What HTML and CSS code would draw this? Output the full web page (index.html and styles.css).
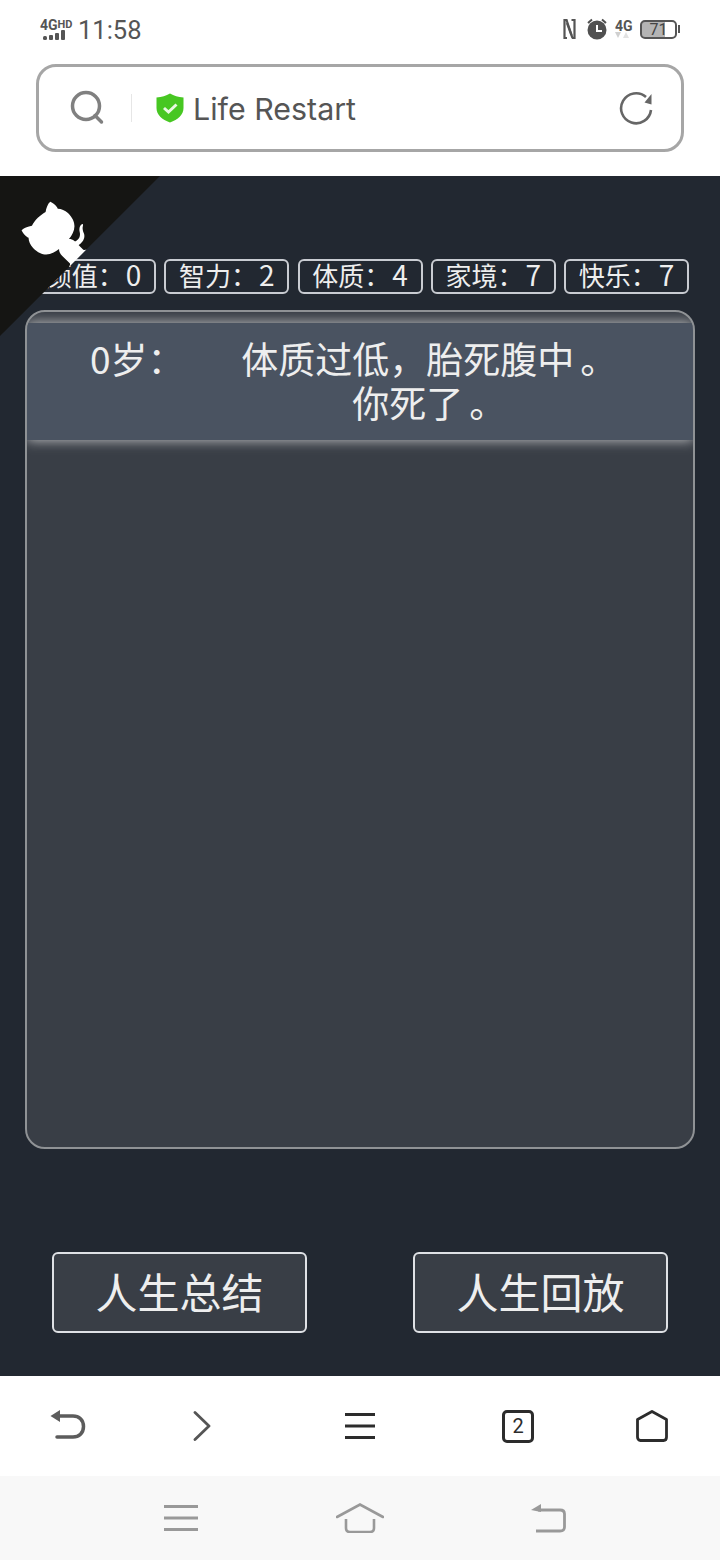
FILE: index.html
```html
<!DOCTYPE html>
<html lang="zh-CN">
<head>
  <meta charset="UTF-8" />
  <meta name="viewport" content="width=device-width, initial-scale=1.0" />
  <title>Life Restart</title>
  <link rel="stylesheet" href="styles.css">
</head>
<body>
  <header class="browser-top">
    <div class="status-bar">
      <div class="status-left">
        <div class="net">
          <div class="net-text">4G<span class="net-hd">HD</span></div>
          <svg class="net-bars" width="26" height="12" viewBox="0 0 26 12">
            <rect x="3" y="7" width="4" height="4" rx="1.5" fill="#555"/>
            <rect x="9" y="6" width="4" height="5" rx="1" fill="#555"/>
            <rect x="15" y="4" width="4" height="7" rx="1" fill="#555"/>
            <rect x="21" y="1" width="4" height="10" rx="1" fill="#555"/>
          </svg>
        </div>
        <span class="clock">11:58</span>
      </div>
      <div class="status-right">
        <svg width="14" height="22" viewBox="0 0 14 22" fill="none" stroke="#555" stroke-width="2.2">
          <path d="M5.500 2H2.500V20H5"/>
          <path d="M5 5L10.500 20"/>
          <path d="M4.500 2L9.500 17"/>
          <path d="M9.500 2H12.500V20H10"/>
        </svg>
        <svg class="alarm" width="22" height="22" viewBox="0 0 22 22">
          <circle cx="11" cy="12" r="9.5" fill="#505050"/>
          <path d="M2 5L6 1.5M20 5L16 1.5" stroke="#505050" stroke-width="2"/>
          <path d="M11 7V13H16" fill="none" stroke="#fff" stroke-width="2"/>
        </svg>
        <div class="net-4g">
          <div class="net-4g-text">4G</div>
          <svg width="14" height="7" viewBox="0 0 14 7">
            <path d="M0 0H6L3 6Z" fill="#d0d0d0"/>
            <path d="M8 6H14L11 0Z" fill="#e2e2e2"/>
          </svg>
        </div>
        <div class="battery"><div class="battery-body">71</div><div class="battery-nub"></div></div>
      </div>
    </div>

    <div class="address-bar">
      <svg class="search-icon" width="36" height="36" viewBox="0 0 36 36" fill="none" stroke="#808080" stroke-width="3.5">
        <circle cx="16" cy="16" r="13.5"/>
        <path d="M25 25.500L31.500 32" stroke-linecap="round"/>
      </svg>
      <span class="address-divider"></span>
      <svg class="shield" width="28" height="30" viewBox="0 0 28 30">
        <path d="M14 0.500C18 3 22 4 27.500 4.500V15C27.500 22 22 26.500 14 29.500C6 26.500 0.500 22 0.500 15V4.500C6 4 10 3 14 0.500Z" fill="#47c722"/>
        <path d="M8 15L12.500 19L20.500 11.500" fill="none" stroke="#e9f9e2" stroke-width="3"/>
      </svg>
      <span class="address-text">Life Restart</span>
      <svg class="reload" width="36" height="36" viewBox="0 0 36 36" fill="none">
        <path d="M33 20A15 15 0 1 1 28 7" stroke="#666" stroke-width="2.600"/>
        <path d="M33.500 4V14.500L26.500 12.500Z" fill="#666"/>
      </svg>
    </div>
  </header>

  <main class="game">
    <a class="corner" href="#" aria-label="GitHub">
      <svg width="160" height="160" viewBox="0 0 250 250">
        <g transform="translate(250 0) scale(-1 1)">
          <path d="M0,0 L115,115 L130,115 L142,142 L250,250 L250,0 Z" fill="#151513"/>
          <path d="M128.3,109.0 C113.8,99.7 119.0,89.6 119.0,89.6 C122.0,82.7 120.5,78.6 120.5,78.6 C119.2,72.0 123.4,76.3 123.4,76.3 C127.3,80.9 125.5,87.3 125.5,87.3 C122.9,97.6 130.6,101.9 134.4,103.2" fill="#fff"/>
          <path d="M115.0,115.0 C114.9,115.1 118.7,116.5 119.8,115.4 L133.7,101.6 C136.9,99.2 139.9,98.4 142.2,98.6 C133.8,88.0 127.5,74.4 143.8,58.0 C148.5,53.4 154.0,51.2 159.7,51.0 C160.3,49.4 163.2,43.6 171.4,40.1 C171.4,40.1 176.1,42.5 178.8,56.2 C183.1,58.6 187.2,61.8 190.9,65.4 C194.5,69.0 197.7,73.2 200.1,77.6 C213.8,80.2 216.3,84.9 216.3,84.9 C212.7,93.1 206.9,96.0 205.4,96.6 C205.1,102.4 203.0,107.8 198.3,112.5 C181.9,128.9 168.3,122.5 157.7,114.1 C157.9,116.9 156.7,120.9 152.7,124.9 L141.0,136.5 C139.8,137.7 141.6,141.9 141.8,141.8 Z" fill="#fff"/>
        </g>
      </svg>
    </a>

    <ul class="stats">
      <li class="stat">颜值：<span class="stat-num">0</span></li>
      <li class="stat">智力：<span class="stat-num">2</span></li>
      <li class="stat">体质：<span class="stat-num">4</span></li>
      <li class="stat">家境：<span class="stat-num">7</span></li>
      <li class="stat">快乐：<span class="stat-num">7</span></li>
    </ul>

    <div class="log">
      <div class="log-row">
        <span class="log-age">0岁：</span>
        <span class="log-text">体质过低，胎死腹中<span class="stop">。</span><br>你死了<span class="stop">。</span></span>
      </div>
    </div>

    <div class="actions">
      <button class="action" type="button">人生总结</button>
      <button class="action" type="button">人生回放</button>
    </div>
  </main>

  <nav class="toolbar">
    <svg width="36" height="34" viewBox="0 0 36 34" fill="none" stroke="#5c5c5c" stroke-width="3.500">
      <path d="M8 7H23C29 7 33.500 11 33.500 17.500C33.500 24 29 28 23 28H7" stroke-linecap="round"/>
      <path d="M0.500 7L10 1V13Z" fill="#5c5c5c" stroke="none"/>
    </svg>
    <svg width="18" height="30" viewBox="0 0 18 30" fill="none" stroke="#555" stroke-width="2.800">
      <path d="M2 1.500L16 15L2 28.500" stroke-linecap="round" stroke-linejoin="round"/>
    </svg>
    <svg width="30" height="26" viewBox="0 0 30 26" fill="none" stroke="#2c2c2c" stroke-width="2.800">
      <path d="M0 1.500H30M0 13H30M0 24.500H30"/>
    </svg>
    <div class="tab-count">2</div>
    <svg width="32" height="32" viewBox="0 0 32 32" fill="none" stroke="#2c2c2c" stroke-width="2.800" stroke-linejoin="round">
      <path d="M16 1.500L30.500 9.500V27C30.500 29 29.500 30.500 27.500 30.500H4.500C2.500 30.500 1.500 29 1.500 27V9.500Z"/>
    </svg>
  </nav>

  <nav class="sys-nav">
    <svg width="34" height="26" viewBox="0 0 34 26" fill="none" stroke="#999" stroke-width="2.800">
      <path d="M0 1.500H34M0 13H34M0 24.500H34"/>
    </svg>
    <svg class="sys-home" width="48" height="30" viewBox="0 0 48 30" fill="none" stroke="#999" stroke-width="2.600">
      <path d="M1 14L24 1.500L47 14" stroke-linecap="round"/>
      <path d="M10 16V25C10 27.500 11.500 29 14 29H34C36.500 29 38 27.500 38 25V16"/>
    </svg>
    <svg width="36" height="30" viewBox="0 0 36 30" fill="none" stroke="#999" stroke-width="2.800">
      <path d="M8 7H30C33 7 34.500 8.500 34.500 11V24C34.500 26.500 33 28 30 28H6"/>
      <path d="M1 7L11 1V9Z" fill="#999" stroke="none"/>
    </svg>
  </nav>
</body>
</html>
```

FILE: styles.css
```css
/* Global Styles */
* {
  box-sizing: border-box;
}
body {
  margin: 0;
  width: 720px;
  height: 1560px;
  display: flex;
  flex-direction: column;
  background-color: #fff;
  font-family: "Noto Sans CJK SC", "Noto Sans", sans-serif;
  overflow: hidden;
}
svg {
  display: block;
}

/* Browser chrome */
.browser-top {
  height: 176px;
  flex: none;
  background-color: #fff;
  font-family: Roboto, "Noto Sans", sans-serif;
}
.status-bar {
  height: 64px;
  padding: 15px 40px 0 40px;
  display: flex;
  justify-content: space-between;
  align-items: flex-start;
}
.status-left {
  display: flex;
  align-items: center;
  gap: 8px;
}
.net {
  width: 30px;
}
.net-text {
  font-size: 14px;
  line-height: 12px;
  font-weight: 700;
  color: #555;
  white-space: nowrap;
}
.net-hd {
  font-size: 11px;
  vertical-align: 2px;
}
.net-bars {
  margin-top: -2px;
}
.clock {
  font-size: 25.5px;
  line-height: 30px;
  color: #555;
}
.status-right {
  display: flex;
  align-items: center;
  margin-top: 3px;
}
.alarm {
  margin-left: 10px;
}
.net-4g {
  margin-left: 7px;
  width: 17px;
}
.net-4g-text {
  font-size: 14px;
  line-height: 12px;
  font-weight: 700;
  color: #555;
}
.battery {
  margin-left: 8px;
  display: flex;
  align-items: center;
}
.battery-body {
  width: 37px;
  height: 19px;
  border: 2px solid #555;
  border-radius: 5px;
  background: linear-gradient(90deg, #b4b4b4 71%, #fff 71%);
  font-size: 16px;
  line-height: 15px;
  text-align: center;
  color: #444;
}
.battery-nub {
  width: 2px;
  height: 8px;
  margin-left: 1px;
  background-color: #555;
}
.address-bar {
  height: 88px;
  margin: 0 36px;
  padding: 0 27px 0 31px;
  display: flex;
  align-items: center;
  border: 3px solid #a6a6a6;
  border-radius: 20px;
}
.search-icon {
  flex: none;
}
.address-divider {
  width: 1px;
  height: 28px;
  margin: 0 24px 0 25px;
  background-color: #e6e6e6;
}
.address-text {
  margin-left: 9px;
  padding-top: 2px;
  flex: 1;
  font-family: Inter, Roboto, sans-serif;
  font-size: 30.4px;
  color: #555;
}

/* Game area */
.game {
  position: relative;
  height: 1200px;
  flex: none;
  padding: 83px 25px 43px;
  display: flex;
  flex-direction: column;
  background-color: #222831;
}
.corner {
  position: absolute;
  left: 0;
  top: 0;
  z-index: 2;
}
.stats {
  margin: 0;
  padding: 0 6px;
  list-style: none;
  display: flex;
  justify-content: space-between;
}
.stat {
  width: 125px;
  height: 35px;
  border: 2px solid #c9ccd2;
  border-radius: 6px;
  font-size: 26px;
  line-height: 27px;
  text-align: center;
  color: #eee;
  white-space: nowrap;
}
.stat-num {
  margin-left: 2px;
  font-size: 28px;
}
.log {
  height: 839px;
  margin-top: 16px;
  padding-top: 11px;
  background-color: #393e46;
  border: 2px solid #8f9295;
  border-radius: 20px;
  overflow: hidden;
}
.log-row {
  display: flex;
  padding: 13px 25px 16px 63px;
  font-size: 37px;
  line-height: 44px;
  color: #eee;
  background-color: #4a5361;
  box-shadow: 0 0 12px rgba(238, 238, 238, 0.8);
}
.log-age {
  flex: none;
  white-space: nowrap;
}
.log-text {
  flex: 1;
  text-align: center;
}
/* the full stop sits in the middle of its cell in the reference font */
.stop {
  margin: 0 -6px 0 6px;
}
.actions {
  margin-top: auto;
  padding: 0 27px;
  display: flex;
  justify-content: space-between;
}
.action {
  width: 255px;
  height: 81px;
  padding: 0 0 5px;
  border: 2px solid #dfe1e5;
  border-radius: 6px;
  background-color: #393e46;
  color: #eee;
  font-family: inherit;
  font-size: 42px;
  cursor: pointer;
}

/* Bottom bars */
.toolbar {
  height: 100px;
  flex: none;
  padding: 0 52px 0 50px;
  display: grid;
  grid-template-columns: 100px 138px 182px 134px 1fr;
  align-items: center;
  background-color: #fff;
}
.toolbar > :nth-child(2) {
  margin-left: 43px;
}
.toolbar > :nth-child(3) {
  margin-left: 57px;
}
.toolbar > :nth-child(4) {
  margin-left: 32px;
}
.toolbar > :nth-child(5) {
  justify-self: end;
}
.tab-count {
  width: 32px;
  height: 33px;
  border: 3px solid #2c2c2c;
  border-radius: 5px;
  font-family: Roboto, sans-serif;
  font-size: 20px;
  line-height: 27px;
  text-align: center;
  color: #2c2c2c;
}
.sys-nav {
  height: 84px;
  flex: none;
  padding: 0 154px 0 164px;
  display: flex;
  justify-content: space-between;
  align-items: center;
  background-color: #f8f8f8;
}
.sys-home {
  margin-right: 8px;
}
```
